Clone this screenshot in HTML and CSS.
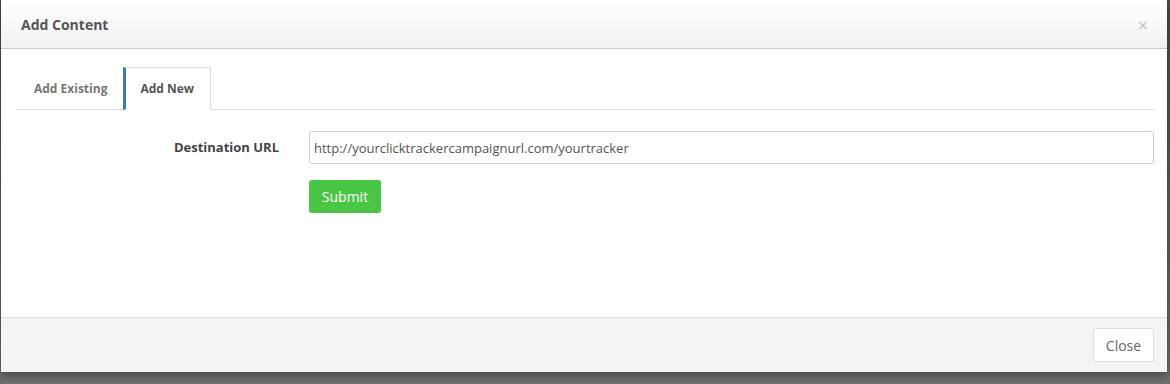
FILE: index.html
```html
<!DOCTYPE html>
<html lang="en">
<head>
  <meta charset="UTF-8">
  <title>Add Content</title>
  <link rel="stylesheet" href="styles.css">
</head>
<body>
  <div class="modal">
    <div class="modal-header">
      <h4>Add Content</h4>
      <span class="close">&times;</span>
    </div>

    <div class="modal-body">
      <ul class="tabs">
        <li>Add Existing</li>
        <li class="active">Add New</li>
      </ul>

      <form class="form-row">
        <label for="url">Destination URL</label>
        <div class="field">
          <input type="text" id="url" value="http://yourclicktrackercampaignurl.com/yourtracker">
          <button type="button" class="btn-submit">Submit</button>
        </div>
      </form>
    </div>

    <div class="modal-footer">
      <button type="button" class="btn-close">Close</button>
    </div>
  </div>
</body>
</html>
```

FILE: styles.css
```css
body {
  margin: 0;
  padding: 0 3px 0 1px;
  height: 384px;
  background: linear-gradient(#4a4a4a, #6e6e6e);
  font-family: 'Open Sans', sans-serif;
  color: #555;
}
.modal {
  background: #fff;
  height: 372px;
  display: flex;
  flex-direction: column;
  box-shadow: 0 3px 8px rgba(0,0,0,0.4);
}
.modal-header {
  height: 49px;
  box-sizing: border-box;
  display: flex;
  align-items: center;
  justify-content: space-between;
  padding: 0 19px 0 20px;
  background: linear-gradient(#fff, #f1f1f1);
  border-bottom: 1px solid #c9c9c9;
}
.modal-header h4 {
  margin: 0;
  font-size: 14px;
  font-weight: 700;
  color: #555;
}
.close {
  font-size: 18px;
  color: #c2c2c2;
  margin-top: 1px;
}
.modal-body {
  flex: 1;
  padding: 18px 13px 0 15px;
}
.tabs {
  list-style: none;
  margin: 0;
  padding: 0;
  display: flex;
  height: 42px;
  border-bottom: 1px solid #ddd;
}
.tabs li {
  padding: 1px 16px 0 18px;
  line-height: 42px;
  font-size: 12px;
  font-weight: 700;
  color: #777;
}
.tabs li.active {
  color: #555;
  background: #fff;
  border: 1px solid #ddd;
  border-left: 3px solid #3f79a8;
  border-bottom-color: #fff;
  margin-bottom: -1px;
  padding: 0 16px 0 14px;
  line-height: 41px;
}
.form-row {
  display: flex;
  margin-top: 21px;
}
.form-row label {
  width: 263px;
  text-align: right;
  padding-right: 30px;
  font-size: 13px;
  font-weight: 700;
  line-height: 33px;
  color: #444;
}
.field {
  flex: 1;
}
.field input {
  display: block;
  width: 100%;
  box-sizing: border-box;
  height: 33px;
  border: 1px solid #ccc;
  border-radius: 3px;
  padding: 0 4px;
  font-family: 'Open Sans', sans-serif;
  font-size: 13px;
  color: #555;
}
.btn-submit {
  margin-top: 16px;
  width: 72px;
  height: 33px;
  border: none;
  border-radius: 3px;
  background: #4ac645;
  color: #fff;
  font-family: 'Open Sans', sans-serif;
  font-size: 14px;
}
.modal-footer {
  height: 55px;
  box-sizing: border-box;
  background: #f4f4f4;
  border-top: 1px solid #ddd;
  display: flex;
  justify-content: flex-end;
  align-items: center;
  padding: 0 13px 0 0;
}
.btn-close {
  width: 61px;
  height: 34px;
  background: #fff;
  border: 1px solid #ddd;
  border-radius: 3px;
  font-family: 'Open Sans', sans-serif;
  font-size: 14px;
  color: #666;
}
```
